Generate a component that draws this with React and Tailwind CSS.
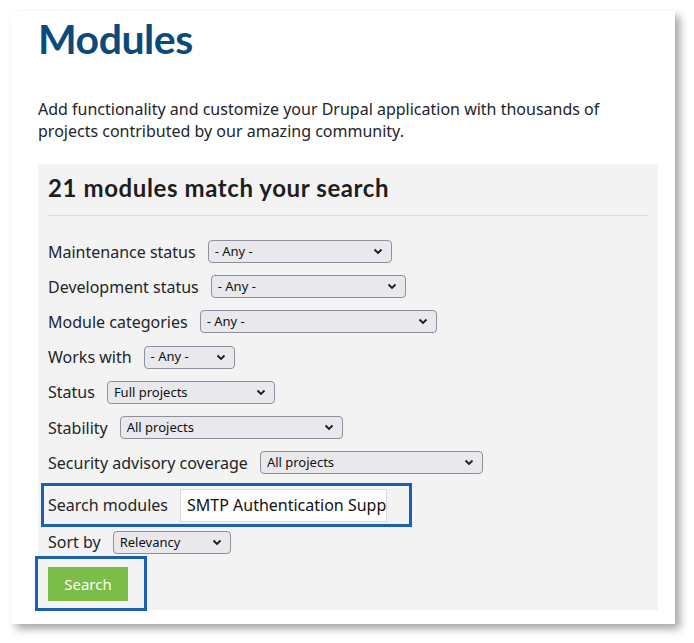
import React from 'react';

const filters = [
    { label: 'Maintenance status', value: '- Any -', width: 'w-[184px]' },
    { label: 'Development status', value: '- Any -', width: 'w-[195px]' },
    { label: 'Module categories', value: '- Any -', width: 'w-[237px]' },
    { label: 'Works with', value: '- Any -', width: 'w-[91px]' },
    { label: 'Status', value: 'Full projects', width: 'w-[168px]' },
    { label: 'Stability', value: 'All projects', width: 'w-[223px]' },
    { label: 'Security advisory coverage', value: 'All projects', width: 'w-[223px]' },
];

const Chevron = () => (
    <svg width="10" height="7" viewBox="0 0 10 7" className="shrink-0">
        <path d="M1.5 1.5 L5 5 L8.5 1.5" fill="none" stroke="#1b1b1b" strokeWidth="1.8" />
    </svg>
);

const FakeSelect = ({ value, width }) => (
    <div className={`${width} h-[23px] flex items-center justify-between pl-[6px] pr-[8px] bg-[#e9e9ed] border border-[#8f8f9d] rounded-[4px] text-[13px] text-[#111]`}>
        <span>{value}</span>
        <Chevron />
    </div>
);

const App = () => {
    return (
        <div className="min-h-[643px] bg-white pt-[11px] pl-[11px] font-['Noto_Sans',sans-serif] text-[#232429]">
            <div className="w-[664px] h-[613px] bg-white shadow-[5px_5px_8px_rgba(0,0,0,0.35)] pl-[27px]">
                <h1 className="font-['Lato',sans-serif] font-bold text-[41px] leading-[56px] text-[#0b4a7a] tracking-[-0.5px]">Modules</h1>
                <p className="mt-[31px] text-[16px] leading-[22px] w-[600px]">
                    Add functionality and customize your Drupal application with thousands of projects contributed by our amazing community.
                </p>
                <div className="mt-[22px] w-[620px] h-[446px] bg-[#f3f3f3] pl-[10px] pr-[10px]">
                    <h2 className="pt-[9px] font-['Lato',sans-serif] font-bold text-[24px] leading-[30px] tracking-[0.6px] text-[#1e1e1e]">21 modules match your search</h2>
                    <div className="mt-[12px] border-t border-[#dcdcdc]" />
                    <div className="mt-[18px] flex flex-col">
                        {filters.map((f) => (
                            <div key={f.label} className="h-[35.2px] flex items-center gap-[12px] text-[16px]">
                                <span>{f.label}</span>
                                <FakeSelect value={f.value} width={f.width} />
                            </div>
                        ))}
                    </div>
                    <div className="mt-[3px] -ml-[7px] w-[371px] h-[44px] border-[3px] border-[#1a5fb4] flex items-center pl-[4px] gap-[12px] text-[16px]">
                        <span>Search modules</span>
                        <input
                            readOnly
                            value="SMTP Authentication Support"
                            className="w-[207px] h-[33px] bg-white border border-[#dcdcdc] pl-[6px] text-[16px] text-[#111] outline-none"
                        />
                    </div>
                    <div className="h-[28px] mt-[1px] flex items-center gap-[12px] text-[16px]">
                        <span>Sort by</span>
                        <FakeSelect value="Relevancy" width="w-[118px]" />
                    </div>
                    <div className="-ml-[13px] w-[112px] h-[55px] border-[3px] border-[#1a5fb4] pl-[10px] pt-[8px]">
                        <button className="w-[80px] h-[34px] bg-[#7bbd46] text-white text-[15px]">Search</button>
                    </div>
                </div>
            </div>
        </div>
    );
};

export default App;
